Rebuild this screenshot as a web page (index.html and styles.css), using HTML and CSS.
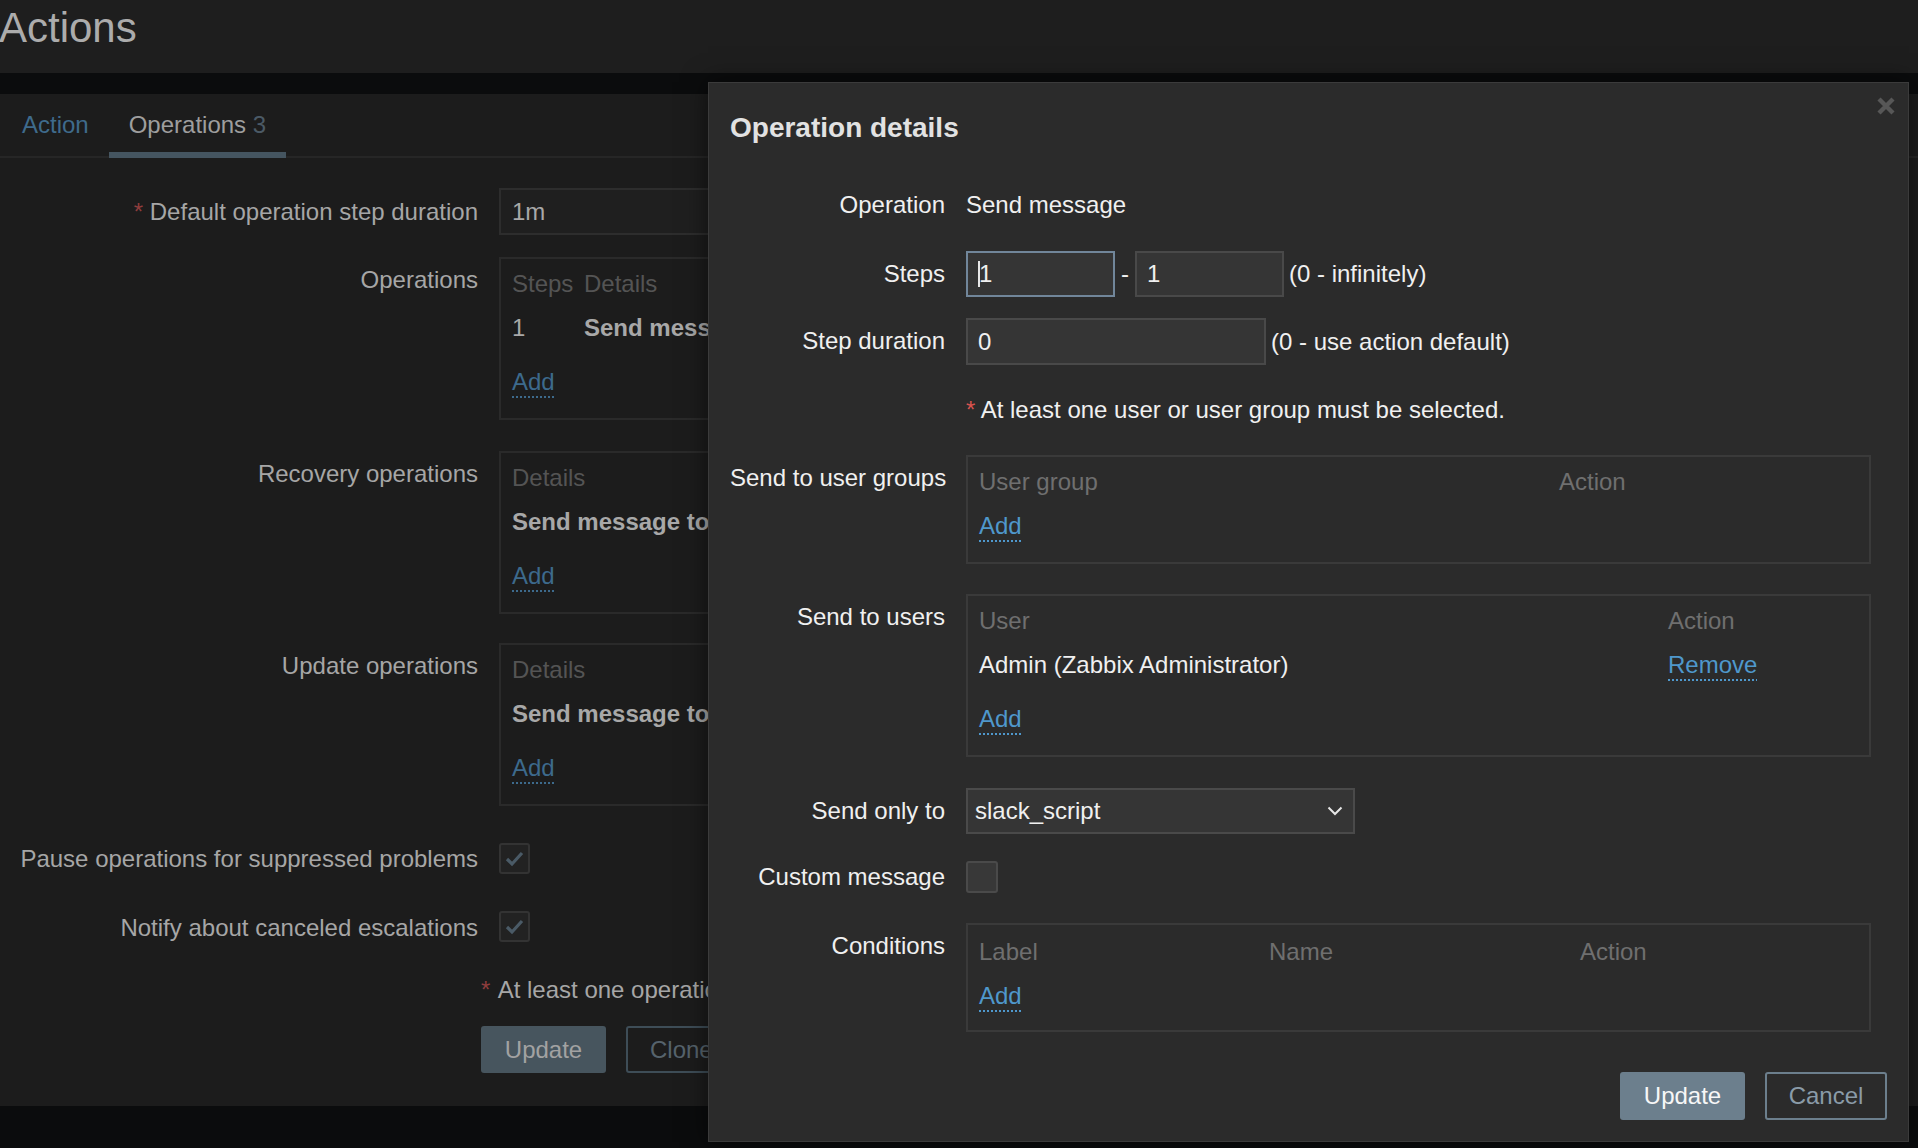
FILE: index.html
```html
<!DOCTYPE html>
<html lang="en">
<head>
<meta charset="utf-8">
<title>Actions</title>
<link rel="stylesheet" href="styles.css">
</head>
<body>
<div class="page">
  <header class="top"><h1 class="title">Actions</h1></header>
  <div class="stripe"></div>
  <main class="panel">
    <nav class="tabs">
      <span class="tab">Action</span>
      <span class="tab active">Operations <span class="count">3</span></span>
    </nav>
    <div class="form">
      <div class="row r1">
        <div class="lbl lbl-input"><span class="req">*</span> Default operation step duration</div>
        <div class="val"><div class="inp">1m</div></div>
      </div>
      <div class="row r2">
        <div class="lbl lbl-box">Operations</div>
        <div class="val">
          <div class="box">
            <div class="brow cols-steps head"><span>Steps</span><span>Details</span></div>
            <div class="brow cols-steps data"><span>1</span><span class="bold">Send message to users: Admin (Zabbix Administrator) via slack_script</span></div>
            <div class="brow add"><span class="link">Add</span></div>
          </div>
        </div>
      </div>
      <div class="row r3">
        <div class="lbl lbl-box">Recovery operations</div>
        <div class="val">
          <div class="box">
            <div class="brow head"><span>Details</span></div>
            <div class="brow data"><span class="bold">Send message to users: Admin (Zabbix Administrator) via slack_script</span></div>
            <div class="brow add"><span class="link">Add</span></div>
          </div>
        </div>
      </div>
      <div class="row r4">
        <div class="lbl lbl-box">Update operations</div>
        <div class="val">
          <div class="box">
            <div class="brow head"><span>Details</span></div>
            <div class="brow data"><span class="bold">Send message to users: Admin (Zabbix Administrator) via slack_script</span></div>
            <div class="brow add"><span class="link">Add</span></div>
          </div>
        </div>
      </div>
      <div class="row r5">
        <div class="lbl lbl-check">Pause operations for suppressed problems</div>
        <div class="val">
          <span class="chk"><svg width="27" height="27" viewBox="0 0 27 27"><polyline points="6,14 11,19 21,8" fill="none" stroke="#4a5a66" stroke-width="3.2"/></svg></span>
        </div>
      </div>
      <div class="row r6">
        <div class="lbl lbl-check">Notify about canceled escalations</div>
        <div class="val">
          <span class="chk"><svg width="27" height="27" viewBox="0 0 27 27"><polyline points="6,14 11,19 21,8" fill="none" stroke="#4a5a66" stroke-width="3.2"/></svg></span>
        </div>
      </div>
      <div class="foot-note"><span class="req">*</span> At least one operation must exist.</div>
      <div class="foot-btns">
        <span class="btn btn-main">Update</span>
        <span class="btn btn-alt">Clone</span>
        <span class="btn btn-alt">Delete</span>
        <span class="btn btn-alt">Cancel</span>
      </div>
    </div>
  </main>

  <div class="modal">
    <span class="close"><svg width="18" height="18" viewBox="0 0 18 18"><path d="M2 2 L16 16 M16 2 L2 16" stroke="#575757" stroke-width="4.4" fill="none"/></svg></span>
    <h2 class="mtitle">Operation details</h2>
    <div class="mform">
      <div class="mrow m-op">
        <div class="mlbl">Operation</div>
        <div class="mval text">Send message</div>
      </div>
      <div class="mrow m-steps">
        <div class="mlbl lbl-input">Steps</div>
        <div class="mval inline">
          <div class="minp small focus"><span class="caret"></span>1</div>
          <span class="dash">-</span>
          <div class="minp small">1</div>
          <span class="hint">(0 - infinitely)</span>
        </div>
      </div>
      <div class="mrow m-dur">
        <div class="mlbl lbl-input">Step duration</div>
        <div class="mval inline">
          <div class="minp wide">0</div>
          <span class="hint">(0 - use action default)</span>
        </div>
      </div>
      <div class="mrow m-note">
        <div class="mlbl"></div>
        <div class="mval text"><span class="mreq">*</span> At least one user or user group must be selected.</div>
      </div>
      <div class="mrow m-groups">
        <div class="mlbl lbl-box">Send to user groups</div>
        <div class="mval">
          <div class="mbox">
            <div class="brow cols-groups head"><span>User group</span><span>Action</span></div>
            <div class="brow gap16"><span class="mlink">Add</span></div>
          </div>
        </div>
      </div>
      <div class="mrow m-users">
        <div class="mlbl lbl-box">Send to users</div>
        <div class="mval">
          <div class="mbox">
            <div class="brow cols-users head"><span>User</span><span>Action</span></div>
            <div class="brow cols-users data"><span>Admin (Zabbix Administrator)</span><span class="mlink">Remove</span></div>
            <div class="brow add"><span class="mlink">Add</span></div>
          </div>
        </div>
      </div>
      <div class="mrow m-only">
        <div class="mlbl lbl-input">Send only to</div>
        <div class="mval">
          <div class="select">
            <span>slack_script</span>
            <svg width="16" height="10" viewBox="0 0 16 10"><polyline points="1.5,1.5 8,8 14.5,1.5" fill="none" stroke="#e6e6e6" stroke-width="2"/></svg>
          </div>
        </div>
      </div>
      <div class="mrow m-custom">
        <div class="mlbl lbl-check">Custom message</div>
        <div class="mval"><span class="mchk"></span></div>
      </div>
      <div class="mrow m-cond">
        <div class="mlbl lbl-box">Conditions</div>
        <div class="mval">
          <div class="mbox cond">
            <div class="brow cols-cond head"><span>Label</span><span>Name</span><span>Action</span></div>
            <div class="brow gap16"><span class="mlink">Add</span></div>
          </div>
        </div>
      </div>
    </div>
    <div class="mbtns">
      <span class="mbtn mbtn-main">Update</span>
      <span class="mbtn mbtn-alt">Cancel</span>
    </div>
  </div>
</div>
</body>
</html>
```

FILE: styles.css
```css
html, body {
  margin: 0;
  padding: 0;
  background: #0b0c0d;
}
body {
  font-family: "Liberation Sans", Arial, Helvetica, sans-serif;
  font-size: 24px;
  line-height: 28px;
}
.page {
  position: relative;
  width: 1918px;
  height: 1148px;
  overflow: hidden;
  background: #0b0c0d;
}

/* header */
.top {
  height: 73px;
  background: #1e1e1e;
  overflow: hidden;
}
.title {
  margin: 0;
  font-weight: normal;
  font-size: 42px;
  line-height: 56px;
  color: #acacac;
  margin-left: -1px;
}
.stripe {
  height: 21px;
  background: #0b0c0d;
}

/* left panel */
.panel {
  background: #1c1c1c;
  padding-bottom: 33px;
  overflow: hidden;
}
.tabs {
  display: flex;
  padding-left: 2px;
  border-bottom: 2px solid #262626;
}
.tab {
  padding: 17px 20px 13px;
  border-bottom: 6px solid transparent;
  margin-bottom: -2px;
  color: #3f6b8c;
  white-space: nowrap;
}
.tab.active {
  color: #9e9e9e;
  border-bottom-color: #455560;
}
.count {
  color: #4b5a66;
}

.form {
  padding-top: 30px;
}
.row {
  display: grid;
  grid-template-columns: 478px 1fr;
  column-gap: 21px;
}
.r2 { margin-top: 22px; }
.r3 { margin-top: 31px; }
.r4 { margin-top: 29px; }
.r5 { margin-top: 37px; }
.r6 { margin-top: 37px; }

.lbl {
  text-align: right;
  color: #a6a6a6;
  white-space: nowrap;
}
.lbl-input { padding-top: 10px; }
.lbl-box { padding-top: 9px; }
.lbl-check { padding-top: 2px; }
.r6 .lbl-check { padding-top: 3px; }
.req {
  color: #8f3d3d;
}
.val {
  white-space: nowrap;
}
.inp {
  box-sizing: border-box;
  width: 420px;
  height: 47px;
  border: 2px solid #2d2d2d;
  background: #1f1f1f;
  padding-left: 11px;
  line-height: 43px;
  color: #a8a8a8;
}
.box {
  box-sizing: border-box;
  width: 820px;
  border: 2px solid #2a2a2a;
  padding: 11px 11px 22px;
  color: #a8a8a8;
  white-space: nowrap;
  overflow: hidden;
}
.brow {
  display: grid;
  grid-template-columns: 1fr;
}
.brow.head { color: #545454; }
.brow.data { margin-top: 16px; }
.brow.add { margin-top: 26px; }
.brow.gap16 { margin-top: 16px; }
.cols-steps { grid-template-columns: 72px 1fr; }
.bold { font-weight: bold; }
.link {
  color: #3d6a8c;
  text-decoration: underline dotted #3d6a8c;
  text-decoration-thickness: 2px;
  text-underline-offset: 6px;
}
.chk {
  display: flex;
  align-items: center;
  justify-content: center;
  box-sizing: border-box;
  width: 31px;
  height: 31px;
  border: 2px solid #333333;
  border-radius: 3px;
  background: #222222;
}
.foot-note {
  margin-top: 34px;
  padding-left: 481px;
  color: #a6a6a6;
  white-space: nowrap;
}
.foot-note .req { margin-right: 2px; }
.foot-btns {
  margin-top: 22px;
  padding-left: 481px;
  display: flex;
  gap: 20px;
}
.btn {
  box-sizing: border-box;
  height: 47px;
  padding: 0 22px;
  border-radius: 3px;
  display: flex;
  align-items: center;
  justify-content: center;
  flex: none;
}
.btn-main {
  width: 125px;
  background: #47555e;
  color: #a2a2a2;
}
.btn-alt {
  border: 2px solid #3e4d57;
  color: #56636c;
}

/* modal */
.modal {
  position: absolute;
  left: 708px;
  top: 82px;
  width: 1201px;
  height: 1060px;
  box-sizing: border-box;
  background: #2b2b2b;
  border: 1px solid #3b3b3b;
  padding: 28px 21px 0 21px;
  box-shadow: 0 0 24px rgba(0, 0, 0, 0.55);
  color: #f0f0f0;
}
.close {
  position: absolute;
  right: 13px;
  top: 14px;
  width: 18px;
  height: 18px;
}
.close svg { display: block; }
.mtitle {
  margin: 0;
  font-size: 28px;
  line-height: 34px;
  font-weight: bold;
  color: #e2e2e2;
}
.mform {
  display: flex;
  flex-direction: column;
}
.mrow {
  display: grid;
  grid-template-columns: 215px 1fr;
  column-gap: 21px;
}
.m-op { margin-top: 46px; }
.m-steps { margin-top: 32px; }
.m-dur { margin-top: 21px; }
.m-note { margin-top: 31px; }
.m-groups { margin-top: 31px; }
.m-users { margin-top: 30px; }
.m-only { margin-top: 31px; }
.m-custom { margin-top: 27px; }
.m-cond { margin-top: 30px; }

.mlbl {
  text-align: right;
  color: #f0f0f0;
  white-space: nowrap;
}
.mrow .lbl-input { padding-top: 9px; }
.mval {
  white-space: nowrap;
}
.mval.inline {
  display: flex;
  align-items: center;
}
.minp {
  box-sizing: border-box;
  height: 46px;
  border: 2px solid #494949;
  background: #353535;
  padding-left: 10px;
  line-height: 42px;
  color: #f0f0f0;
  display: flex;
  align-items: center;
}
.minp.small { width: 149px; }
.minp.wide { width: 300px; height: 47px; }
.minp.focus { border-color: #71869a; }
.caret {
  display: inline-block;
  width: 2px;
  height: 26px;
  background: #e8e8e8;
  margin-right: -1px;
}
.dash {
  margin: 0 6px;
}
.hint {
  margin-left: 5px;
}
.mreq {
  color: #d9534f;
}
.mbox {
  box-sizing: border-box;
  width: 905px;
  border: 2px solid #3a3a3a;
  padding: 11px 11px 22px;
  white-space: nowrap;
}
.mbox .brow.head { color: #6f6f6f; }
.cols-groups { grid-template-columns: 580px 1fr; }
.cols-users { grid-template-columns: 689px 1fr; }
.cols-cond { grid-template-columns: 290px 311px 1fr; }
.mbox.cond .brow.head { margin-top: 2px; }
.mbox.cond { padding-bottom: 20px; }
.mlink {
  color: #4f98cc;
  text-decoration: underline dotted #4f98cc;
  text-decoration-thickness: 2px;
  text-underline-offset: 6px;
  justify-self: start;
}
.select {
  box-sizing: border-box;
  width: 389px;
  height: 46px;
  border: 2px solid #4a4a4a;
  background: #353535;
  display: flex;
  align-items: center;
  justify-content: space-between;
  padding: 0 10px 0 7px;
  color: #f0f0f0;
}
.select svg { display: block; }
.mchk {
  display: block;
  box-sizing: border-box;
  width: 32px;
  height: 32px;
  border: 2px solid #4a4a4a;
  border-radius: 3px;
  background: #383838;
}
.mbtns {
  display: flex;
  justify-content: flex-end;
  gap: 20px;
  margin-top: 40px;
}
.mbtn {
  box-sizing: border-box;
  height: 48px;
  border-radius: 3px;
  display: flex;
  align-items: center;
  justify-content: center;
}
.mbtn-main {
  width: 125px;
  background: #6c7f8d;
  color: #f7f7f7;
}
.mbtn-alt {
  width: 122px;
  border: 2px solid #6c7f8d;
  color: #8a9ba8;
}
```
